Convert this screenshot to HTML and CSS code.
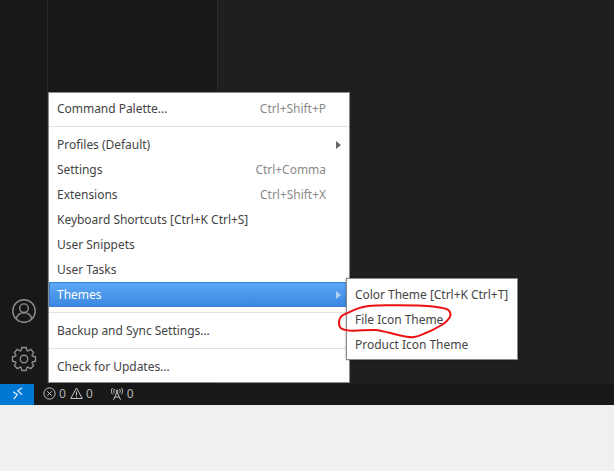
FILE: index.html
```html
<!DOCTYPE html>
<html lang="en">
<head>
<meta charset="utf-8">
<title>Manage menu</title>
<link rel="stylesheet" href="styles.css">
</head>
<body>
<div class="workbench">
  <aside class="activity">
    <svg class="act-icon" width="26" height="26" viewBox="0 0 26 26" fill="none" stroke="#8c8c8c" stroke-width="1.4">
      <circle cx="13" cy="13" r="11.200"/>
      <circle cx="13" cy="10.200" r="4.300"/>
      <path d="M5.300 21c.8-3.800 3.600-6.200 7.700-6.200s6.900 2.400 7.700 6.200"/>
    </svg>
    <svg class="act-icon" width="26" height="26" viewBox="0 0 26 26" fill="none" stroke="#8c8c8c" stroke-width="1.400" stroke-linejoin="round">
      <circle cx="13" cy="13" r="3.800"/>
      <polygon transform="translate(13 13)" points="-3,-8.300 -2.200,-11.500 2.200,-11.500 3,-8.300 3.750,-7.990 6.580,-9.690 9.690,-6.580 7.990,-3.750 8.300,-3 11.500,-2.200 11.500,2.200 8.300,3 7.990,3.750 9.690,6.580 6.580,9.690 3.750,7.990 3,8.300 2.200,11.500 -2.200,11.500 -3,8.300 -3.750,7.990 -6.580,9.690 -9.690,6.580 -7.990,3.750 -8.300,3 -11.500,2.200 -11.500,-2.200 -8.300,-3 -7.990,-3.750 -9.690,-6.580 -6.580,-9.690 -3.750,-7.990"/>
    </svg>
  </aside>
  <div class="sidebar"></div>
  <main class="editor"></main>
</div>
<footer class="status">
  <div class="remote">
    <svg width="12" height="13" viewBox="0 0 12 13" fill="none" stroke="#d6eafa" stroke-width="1.300">
      <path d="M2 4.800L6.300 7.500 2.800 12.200M11 .8L6.800 3.800 11 7.800"/>
    </svg>
  </div>
  <div class="stat errors">
    <svg width="13" height="13" viewBox="0 0 13 13" fill="none" stroke="#c4c4c4" stroke-width="1">
      <circle cx="6.500" cy="6.500" r="5.600"/>
      <path d="M4.300 4.300l4.400 4.400M8.700 4.300l-4.400 4.400"/>
    </svg>
    <span>0</span>
    <svg class="warn" width="13" height="13" viewBox="0 0 13 13" fill="none" stroke="#c4c4c4" stroke-width="1">
      <path d="M6.500 1L12.300 11.500H.7z"/>
      <path d="M6.500 4.500v4M6.500 9.300v1.200"/>
    </svg>
    <span>0</span>
  </div>
  <div class="stat ports">
    <svg width="12" height="12" viewBox="0 0 12 12" fill="none" stroke="#c4c4c4" stroke-width="1">
      <path d="M2.500 11.800L6 4l3.500 7.800M4 9h4"/>
      <circle cx="6" cy="3" r="1"/>
      <path d="M3.500 1c-1 1.300-1 3 0 4.300M8.500 1c1 1.300 1 3 0 4.300M1.500 0C0 2 0 4.300 1.500 6.300M10.500 0c1.500 2 1.500 4.300 0 6.300"/>
    </svg>
    <span>0</span>
  </div>
</footer>
<div class="page-rest"></div>

<div class="menu main-menu">
  <div class="item"><span>Command Palette...</span><span class="key">Ctrl+Shift+P</span></div>
  <div class="sep"></div>
  <div class="item"><span>Profiles (Default)</span><i class="arrow"></i></div>
  <div class="item"><span>Settings</span><span class="key">Ctrl+Comma</span></div>
  <div class="item"><span>Extensions</span><span class="key">Ctrl+Shift+X</span></div>
  <div class="item"><span>Keyboard Shortcuts [Ctrl+K Ctrl+S]</span></div>
  <div class="item"><span>User Snippets</span></div>
  <div class="item"><span>User Tasks</span></div>
  <div class="item active"><span>Themes</span><i class="arrow"></i></div>
  <div class="sep"></div>
  <div class="item"><span>Backup and Sync Settings...</span></div>
  <div class="sep"></div>
  <div class="item"><span>Check for Updates...</span></div>
</div>
<div class="menu sub-menu">
  <div class="item"><span>Color Theme [Ctrl+K Ctrl+T]</span></div>
  <div class="item"><span>File Icon Theme</span></div>
  <div class="item"><span>Product Icon Theme</span></div>
</div>
<svg class="scribble" width="118" height="38" viewBox="0 0 118 38" fill="none" stroke="#ee1111" stroke-width="2" stroke-linecap="round" stroke-linejoin="round">
  <path d="M11.300 9.700C18 6 24 4 31.300 3C40 2 50 2.300 58 2.300C72 2.300 86 2.500 98 3.700C104 4.500 109 5 111.300 7C113.500 9 114 11 113 13.700C111.500 17 108 20 104.700 22C98 26 94 28 88 30.300C83 32.500 79 34.500 74.700 34.300C70 34 66 33 61.300 32C54 30.500 46 27.500 38 27C30 26.800 22 28 14.700 27.700C10 27.500 6 27 4 25.300C2 23.500 1.800 21 2 18.700C2.200 16.500 3 14.500 4.700 13C6.500 11.500 9 10.800 11.300 9.700"/>
</svg>
</body>
</html>
```
FILE: styles.css
```css
* { box-sizing: border-box; }
html, body { margin: 0; padding: 0; }
body {
  width: 614px;
  height: 471px;
  overflow: hidden;
  position: relative;
  background: #f0f0f0;
  font-family: "Noto Sans", sans-serif;
  font-size: 12px;
  color: #444;
}
.workbench { display: flex; height: 384px; background: #181818; }
.activity {
  width: 48px;
  border-right: 1px solid #2b2b2b;
  display: flex;
  flex-direction: column;
  justify-content: flex-end;
  align-items: center;
  gap: 22px;
  padding-bottom: 12px;
}
.act-icon { display: block; }
.sidebar { width: 170px; border-right: 1px solid #2b2b2b; }
.editor { flex: 1; background: #1f1f1f; }
.status {
  height: 21px;
  background: #181818;
  display: flex;
  align-items: center;
  color: #b5b5b5;
  font-size: 12px;
}
.remote {
  width: 34px;
  height: 100%;
  background: #0078d4;
  display: flex;
  align-items: center;
  justify-content: center;
  padding-bottom: 2px;
}
.stat { display: flex; align-items: center; gap: 3px; padding-bottom: 2px; }
.errors { margin-left: 9px; }
.warn { margin-left: 1px; }
.ports { margin-left: 18px; gap: 4px; }
.page-rest { height: 66px; }
.menu {
  position: absolute;
  background: #fff;
  border: 1px solid #8a8a8a;
  padding: 3px 0;
  font-size: 12px;
  letter-spacing: -0.03px;
}
.main-menu { left: 48px; top: 92px; width: 302px; height: 291px; }
.sub-menu { left: 346px; top: 278px; width: 172px; height: 82px; box-shadow: 0 0 2px rgba(0,0,0,.4); }
.item {
  height: 25px;
  padding: 0 8px;
  display: flex;
  align-items: center;
  justify-content: space-between;
  white-space: nowrap;
}
.key { color: #8a8a8a; margin-right: 15px; }
.sep { height: 1px; margin: 5px 0; background: #e2e2e2; }
.arrow {
  width: 0;
  height: 0;
  border-left: 5px solid #666;
  border-top: 4px solid transparent;
  border-bottom: 4px solid transparent;
}
.active {
  background: linear-gradient(#5ea8f7, #3a87e0);
  box-shadow: inset 0 0 0 1px #3a7fd0;
  color: #fff;
}
.active .arrow { border-left-color: #b5d2f2; }
.scribble { position: absolute; left: 337px; top: 303px; }
```
